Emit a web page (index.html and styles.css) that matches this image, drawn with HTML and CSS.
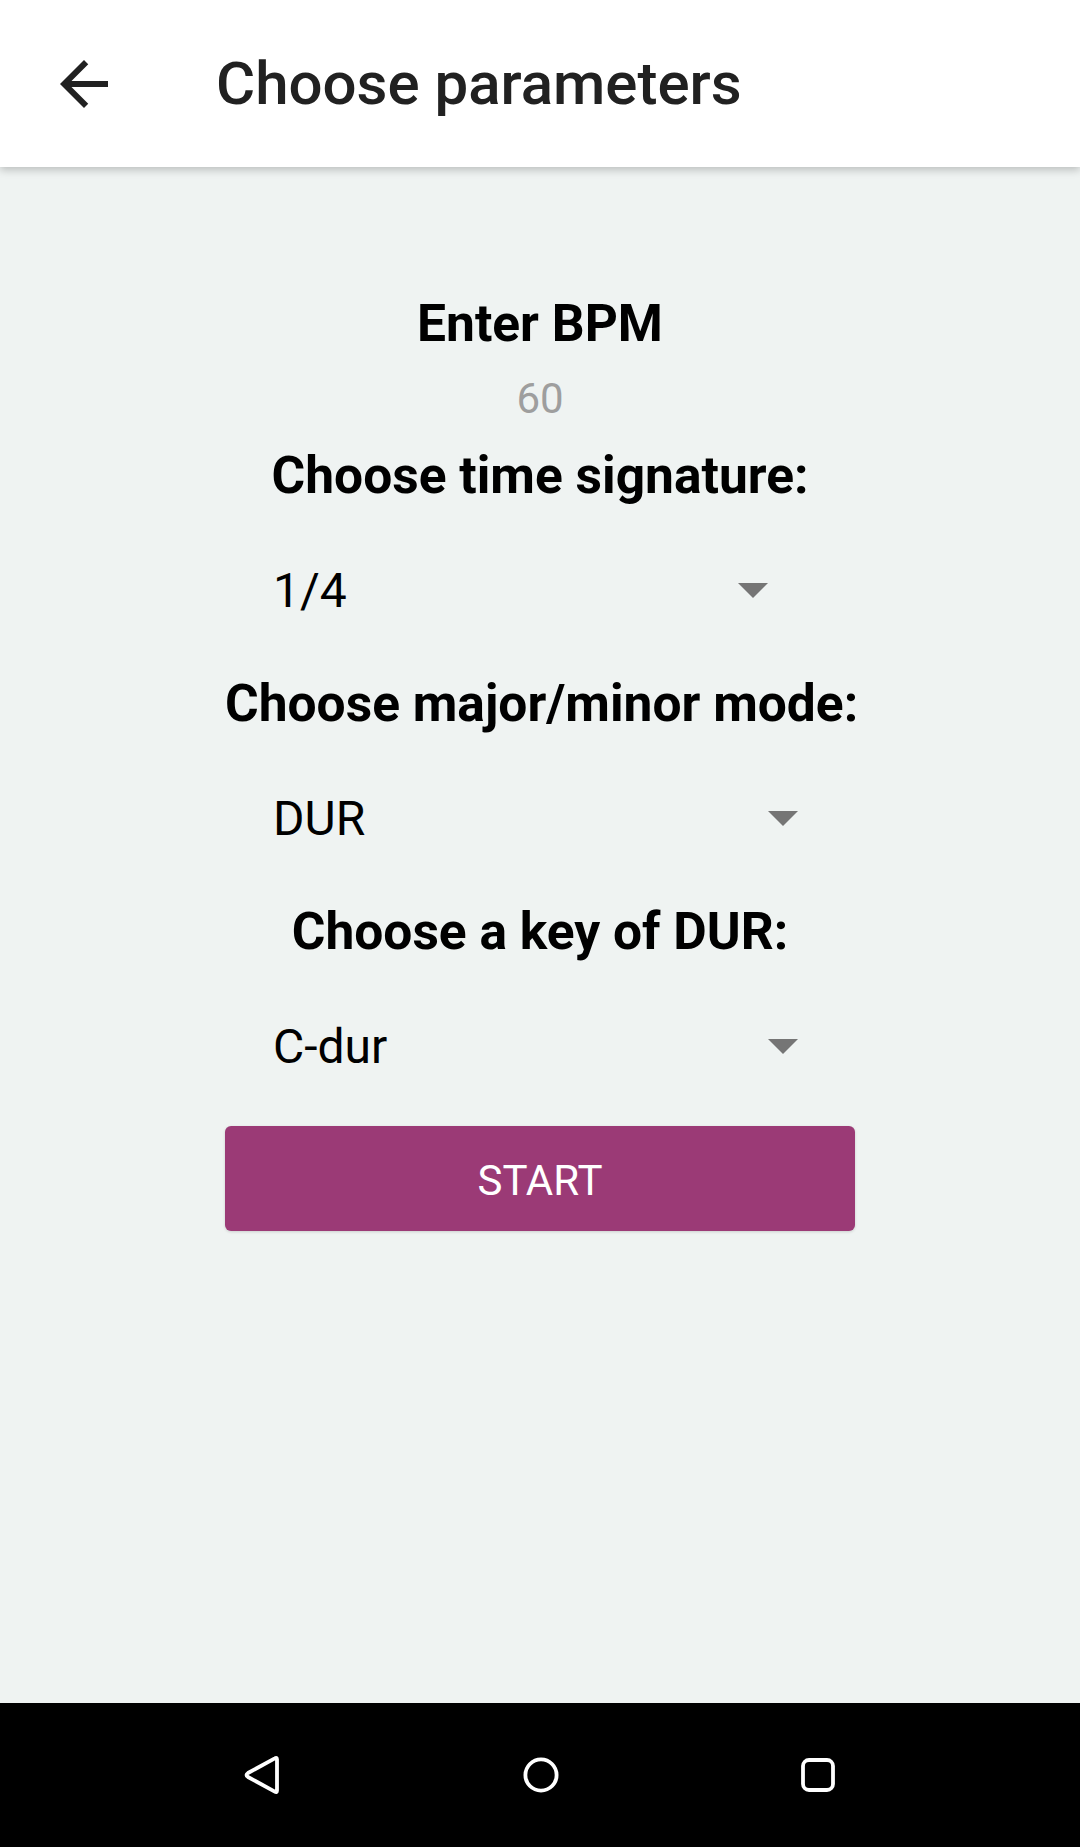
FILE: index.html
```html
<!DOCTYPE html>
<html>
<head>
<meta charset="utf-8">
<link rel="stylesheet" href="styles.css">
</head>
<body>
<div class="screen">
  <header class="toolbar">
    <svg class="back" viewBox="0 0 24 24" width="72" height="72"><path d="M20 11H7.83l5.59-5.59L12 4l-8 8 8 8 1.41-1.41L7.83 13H20v-2z"/></svg>
    <h1 class="title">Choose parameters</h1>
  </header>
  <main class="content">
    <div class="column">
      <div class="label label-first">Enter BPM</div>
      <div class="bpm">60</div>
      <div class="label">Choose time signature:</div>
      <div class="spinner spinner-narrow"><span>1/4</span><span class="caret"></span></div>
      <div class="label">Choose major/minor mode:</div>
      <div class="spinner spinner-wide"><span>DUR</span><span class="caret"></span></div>
      <div class="label">Choose a key of DUR:</div>
      <div class="spinner spinner-wide"><span>C-dur</span><span class="caret"></span></div>
      <div class="button">START</div>
    </div>
  </main>
  <nav class="navbar">
    <svg class="nav-icon" viewBox="0 0 40 40" width="40" height="40"><path d="M33 4.5 L33 35.5 Q33 38 30.8 36.7 L4 22 Q1 20 4 18 L30.8 3.3 Q33 2 33 4.5 Z" fill="none" stroke="#fff" stroke-width="3.8" stroke-linejoin="round"/></svg>
    <svg class="nav-icon" viewBox="0 0 40 40" width="40" height="40"><circle cx="20" cy="20" r="15.6" fill="none" stroke="#fff" stroke-width="3.8"/></svg>
    <svg class="nav-icon" viewBox="0 0 40 40" width="40" height="40"><rect x="5" y="5" width="30" height="30" rx="6" fill="none" stroke="#fff" stroke-width="3.8"/></svg>
  </nav>
</div>
</body>
</html>
```
FILE: styles.css
```css
html, body {
  margin: 0;
  padding: 0;
}
body {
  width: 1080px;
  height: 1847px;
  background: #eff3f2;
  font-family: Roboto, "Noto Sans", sans-serif;
  overflow: hidden;
}
.screen {
  display: flex;
  flex-direction: column;
  height: 1847px;
}
.toolbar {
  height: 167px;
  flex: none;
  background: #ffffff;
  display: flex;
  align-items: center;
  padding-left: 48px;
  box-shadow: 0 3px 8px rgba(0, 0, 0, 0.22);
  position: relative;
  z-index: 1;
}
.back {
  fill: #212121;
  flex: none;
}
.title {
  margin: 0 0 0 96px;
  font-size: 60px;
  font-weight: 500;
  color: #212121;
  line-height: 72px;
}
.content {
  flex: 1;
}
.column {
  width: 630px;
  margin: 0 auto;
  display: flex;
  flex-direction: column;
}
.label {
  font-size: 51.5px;
  font-weight: 700;
  line-height: 60px;
  color: #000;
  text-align: center;
  margin-top: 55px;
  white-space: nowrap;
}
.label-first {
  margin-top: 127px;
}
.bpm {
  font-size: 42px;
  line-height: 50px;
  color: #9e9e9e;
  text-align: center;
  margin-top: 20px;
  margin-bottom: -33px;
}
.spinner {
  margin-top: 57px;
  margin-left: 48px;
  display: flex;
  align-items: center;
  justify-content: space-between;
  font-size: 48px;
  line-height: 56px;
  color: #000;
}
.spinner-narrow {
  width: 495px;
}
.spinner-wide {
  width: 525px;
}
.caret {
  width: 0;
  height: 0;
  border-left: 15px solid transparent;
  border-right: 15px solid transparent;
  border-top: 15px solid #757575;
  margin-top: -2px;
}
.button {
  margin-top: 51px;
  height: 105px;
  background: #9b3a76;
  border-radius: 6px;
  color: #fff;
  font-size: 42px;
  display: flex;
  align-items: center;
  justify-content: center;
  padding-top: 3px;
  box-sizing: border-box;
  box-shadow: 0 1px 3px rgba(0, 0, 0, 0.15);
}
.navbar {
  height: 144px;
  flex: none;
  background: #000;
  display: flex;
  align-items: center;
  justify-content: center;
  gap: 237px;
  padding-left: 2px;
}
.nav-icon {
  flex: none;
}
```
